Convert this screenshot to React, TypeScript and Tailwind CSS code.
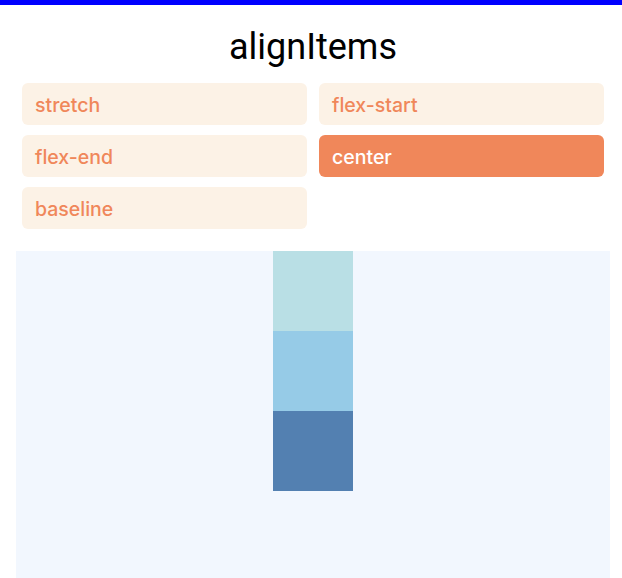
import { useState } from "react";

const options = ["stretch", "flex-start", "flex-end", "center", "baseline"];

const boxes = ["bg-[#b9dfe5]", "bg-[#96cbe7]", "bg-[#5380b1]"];

export default function App() {
  const [selected, setSelected] = useState("center");

  return (
    <div className="w-[622px] h-[578px] bg-white overflow-hidden flex flex-col">
      <div className="h-[5px] bg-[#0000ff]" />
      <h1 className="text-center text-[36px] leading-[42px] mt-[21px] pl-[4px] text-black font-['Roboto',sans-serif]">
        alignItems
      </h1>
      <div className="grid grid-cols-2 gap-x-3 gap-y-[10px] pl-[22px] pr-[18px] mt-[15px]">
        {options.map((opt) => (
          <button
            key={opt}
            onClick={() => setSelected(opt)}
            className={
              "h-[42px] rounded-md px-[13px] pt-1 text-left text-[19.5px] font-medium font-['Inter',sans-serif] " +
              (selected === opt ? "bg-[#f0875a] text-white" : "bg-[#fcf2e6] text-[#f0875a]")
            }
          >
            {opt}
          </button>
        ))}
      </div>
      <div className="ml-4 mr-3 mt-[22px] flex-1 bg-[#f2f7fe] flex justify-center">
        <div className="flex flex-col">
          {boxes.map((b) => (
            <div key={b} className={"w-20 h-20 " + b} />
          ))}
        </div>
      </div>
    </div>
  );
}
